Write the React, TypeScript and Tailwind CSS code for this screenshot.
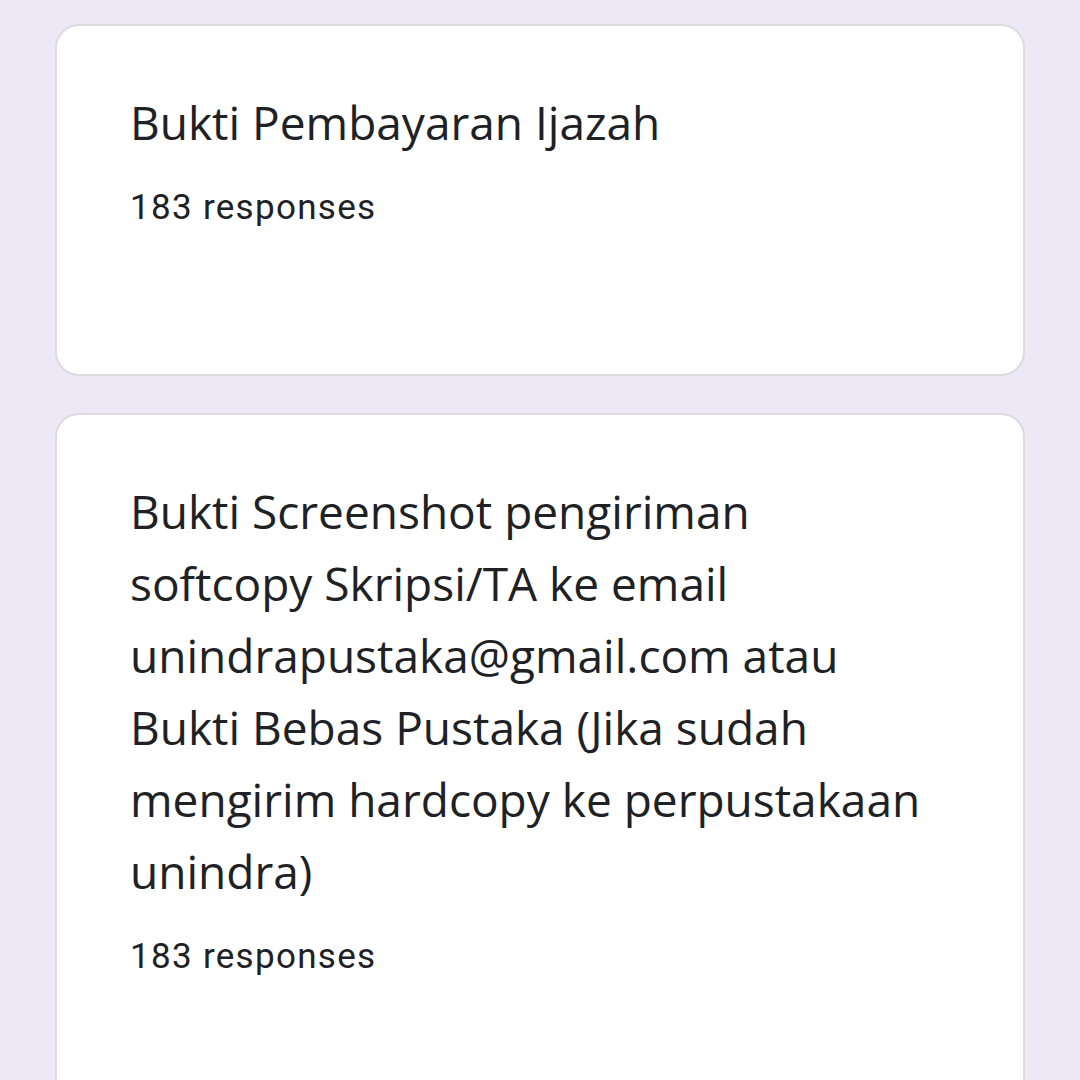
import React from 'react'

const cards = [
  {
    lines: ['Bukti Pembayaran Ijazah'],
    responses: '183 responses',
    extra: 'h-[352px]',
  },
  {
    lines: [
      'Bukti Screenshot pengiriman',
      'softcopy Skripsi/TA ke email',
      'unindrapustaka@gmail.com atau',
      'Bukti Bebas Pustaka (Jika sudah',
      'mengirim hardcopy ke perpustakaan',
      'unindra)',
    ],
    responses: '183 responses',
    extra: 'h-[720px]',
  },
]

export default function App() {
  return (
    <div className="w-[1080px] h-[1080px] overflow-hidden bg-[#ede7f6] px-[55px] pt-[24px]">
      <div className="flex flex-col gap-[37px]">
        {cards.map((card, i) => (
          <div
            key={i}
            className={`${card.extra} shrink-0 bg-white border-2 border-[#dadce0] rounded-[24px] pl-[73px] pr-[40px] pt-[60px]`}
          >
            <h2
              className="text-[#202124] text-[46px] leading-[72px] whitespace-nowrap"
              style={{ fontFamily: '"Open Sans", sans-serif' }}
            >
              {card.lines.map((line, j) => (
                <span key={j} className="block">
                  {line}
                </span>
              ))}
            </h2>
            <p
              className="mt-[30px] text-[#202124] text-[35px] leading-[40px] tracking-[1.3px]"
              style={{ fontFamily: 'Roboto, sans-serif' }}
            >
              {card.responses}
            </p>
          </div>
        ))}
      </div>
    </div>
  )
}
